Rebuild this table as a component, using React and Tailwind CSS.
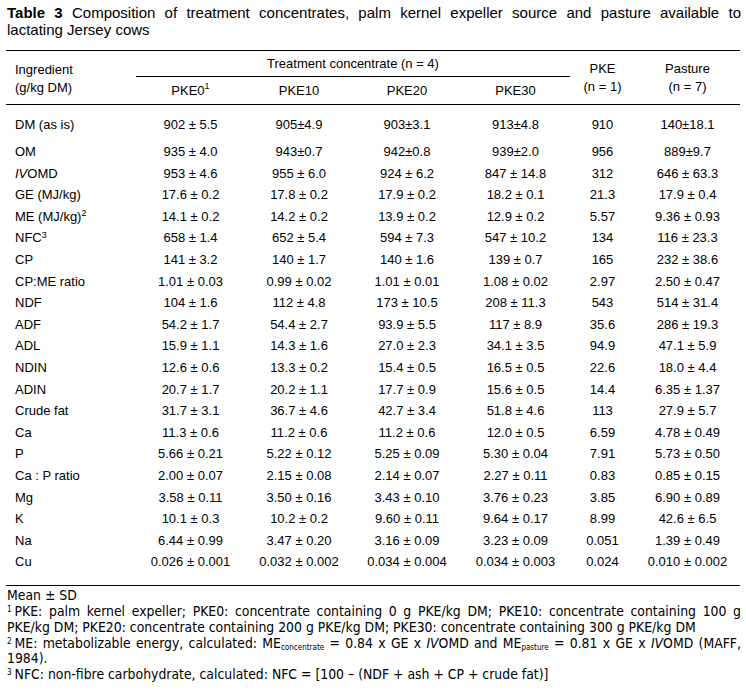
import React from 'react';

const rows = [
  ['DM (as is)', '902 ± 5.5', '905±4.9', '903±3.1', '913±4.8', '910', '140±18.1'],
  ['OM', '935 ± 4.0', '943±0.7', '942±0.8', '939±2.0', '956', '889±9.7'],
  ['IVOMD', '953 ± 4.6', '955 ± 6.0', '924 ± 6.2', '847 ± 14.8', '312', '646 ± 63.3'],
  ['GE (MJ/kg)', '17.6 ± 0.2', '17.8 ± 0.2', '17.9 ± 0.2', '18.2 ± 0.1', '21.3', '17.9 ± 0.4'],
  ['ME (MJ/kg)', '14.1 ± 0.2', '14.2 ± 0.2', '13.9 ± 0.2', '12.9 ± 0.2', '5.57', '9.36 ± 0.93'],
  ['NFC', '658 ± 1.4', '652 ± 5.4', '594 ± 7.3', '547 ± 10.2', '134', '116 ± 23.3'],
  ['CP', '141 ± 3.2', '140 ± 1.7', '140 ± 1.6', '139 ± 0.7', '165', '232 ± 38.6'],
  ['CP:ME ratio', '1.01 ± 0.03', '0.99 ± 0.02', '1.01 ± 0.01', '1.08 ± 0.02', '2.97', '2.50 ± 0.47'],
  ['NDF', '104 ± 1.6', '112 ± 4.8', '173 ± 10.5', '208 ± 11.3', '543', '514 ± 31.4'],
  ['ADF', '54.2 ± 1.7', '54.4 ± 2.7', '93.9 ± 5.5', '117 ± 8.9', '35.6', '286 ± 19.3'],
  ['ADL', '15.9 ± 1.1', '14.3 ± 1.6', '27.0 ± 2.3', '34.1 ± 3.5', '94.9', '47.1 ± 5.9'],
  ['NDIN', '12.6 ± 0.6', '13.3 ± 0.2', '15.4 ± 0.5', '16.5 ± 0.5', '22.6', '18.0 ± 4.4'],
  ['ADIN', '20.7 ± 1.7', '20.2 ± 1.1', '17.7 ± 0.9', '15.6 ± 0.5', '14.4', '6.35 ± 1.37'],
  ['Crude fat', '31.7 ± 3.1', '36.7 ± 4.6', '42.7 ± 3.4', '51.8 ± 4.6', '113', '27.9 ± 5.7'],
  ['Ca', '11.3 ± 0.6', '11.2 ± 0.6', '11.2 ± 0.6', '12.0 ± 0.5', '6.59', '4.78 ± 0.49'],
  ['P', '5.66 ± 0.21', '5.22 ± 0.12', '5.25 ± 0.09', '5.30 ± 0.04', '7.91', '5.73 ± 0.50'],
  ['Ca : P ratio', '2.00 ± 0.07', '2.15 ± 0.08', '2.14 ± 0.07', '2.27 ± 0.11', '0.83', '0.85 ± 0.15'],
  ['Mg', '3.58 ± 0.11', '3.50 ± 0.16', '3.43 ± 0.10', '3.76 ± 0.23', '3.85', '6.90 ± 0.89'],
  ['K', '10.1 ± 0.3', '10.2 ± 0.2', '9.60 ± 0.11', '9.64 ± 0.17', '8.99', '42.6 ± 6.5'],
  ['Na', '6.44 ± 0.99', '3.47 ± 0.20', '3.16 ± 0.09', '3.23 ± 0.09', '0.051', '1.39 ± 0.49'],
  ['Cu', '0.026 ± 0.001', '0.032 ± 0.002', '0.034 ± 0.004', '0.034 ± 0.003', '0.024', '0.010 ± 0.002'],
];

const cols = 'grid grid-cols-[130px_109px_108px_108px_109px_65px_105px]';

const Label = ({ text }) => {
  if (text === 'IVOMD') return <><i>IV</i>OMD</>;
  if (text === 'ME (MJ/kg)') return <>ME (MJ/kg)<sup className="text-[9px]">2</sup></>;
  if (text === 'NFC') return <>NFC<sup className="text-[9px]">3</sup></>;
  return text;
};

const Sup = ({ n }) => <sup className="text-[8px] mr-[3px]">{n}</sup>;

const App = () => {
  return (
    <div className="w-[746px] h-[691px] bg-white text-black pl-[6px] font-['Liberation_Sans',Arial,sans-serif]">
      {/* Caption */}
      <div className="w-[735px] pt-[4px] pl-[1px] text-[15px] leading-[17px]">
        <p className="text-justify [text-align-last:justify]">
          <b>Table 3</b> Composition of treatment concentrates, palm kernel expeller source and pasture available to
        </p>
        <p>lactating Jersey cows</p>
      </div>

      {/* Table */}
      <div className="w-[734px] mt-[12px] text-[13px]">
        <div className={`${cols} grid-rows-[26px_27px] border-t border-b border-black`}>
          <div className="row-span-2 pl-[9px] pt-[10px] leading-[18px]">
            <div>Ingredient</div>
            <div>(g/kg DM)</div>
          </div>
          <div className="col-span-4 border-b border-black flex items-center justify-center pt-[1px]">
            Treatment concentrate (n = 4)
          </div>
          <div className="row-span-2 flex flex-col items-center pt-[9px] leading-[18px]">
            <div>PKE</div>
            <div>(n = 1)</div>
          </div>
          <div className="row-span-2 flex flex-col items-center pt-[9px] leading-[18px]">
            <div>Pasture</div>
            <div>(n = 7)</div>
          </div>
          <div className="flex items-center justify-center">PKE0<sup className="text-[9px]">1</sup></div>
          <div className="flex items-center justify-center">PKE10</div>
          <div className="flex items-center justify-center">PKE20</div>
          <div className="flex items-center justify-center">PKE30</div>
        </div>

        <div className="pt-[9px] pb-[12px] border-b border-black">
          {rows.map((r, i) => (
            <div key={r[0]} className={`${cols} leading-[21.6px] ${i === 0 ? 'h-[27px]' : 'h-[21.6px]'}`}>
              <div className="pl-[9px] whitespace-nowrap"><Label text={r[0]} /></div>
              {r.slice(1).map((v, j) => (
                <div key={j} className="text-center whitespace-nowrap">{v}</div>
              ))}
            </div>
          ))}
        </div>
      </div>

      {/* Footnotes */}
      <div className="w-[735px] pl-[1px] text-[13.85px] leading-[15.6px] font-['DejaVu_Sans_Condensed','Liberation_Sans',sans-serif]">
        <p className="mt-[2px] mb-[1px]">Mean ± SD</p>
        <p className="text-justify [text-align-last:justify]">
          <Sup n="1" />PKE: palm kernel expeller; PKE0: concentrate containing 0 g PKE/kg DM; PKE10: concentrate containing 100 g
        </p>
        <p>PKE/kg DM; PKE20: concentrate containing 200 g PKE/kg DM; PKE30: concentrate containing 300 g PKE/kg DM</p>
        <p className="text-justify [text-align-last:justify]">
          <Sup n="2" />ME: metabolizable energy, calculated: ME<sub className="text-[8px]">concentrate</sub> = 0.84 x GE x <i>IV</i>OMD and ME<sub className="text-[8px]">pasture</sub> = 0.81 x GE x <i>IV</i>OMD (MAFF,
        </p>
        <p>1984).</p>
        <p>
          <Sup n="3" />NFC: non-fibre carbohydrate, calculated: NFC = [100 – (NDF + ash + CP + crude fat)]
        </p>
      </div>
    </div>
  );
};

export default App;
